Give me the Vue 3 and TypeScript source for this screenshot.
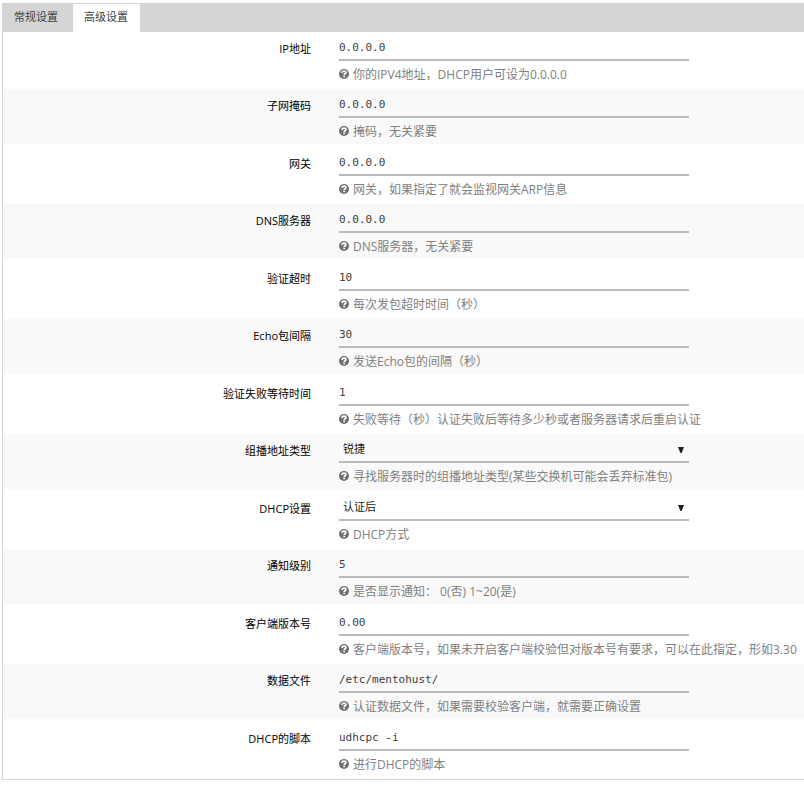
<script setup lang="ts">
import { reactive, ref } from 'vue'

interface Field {
  id: string
  label: string
  value: string
  help: string
  options?: string[]
}

const tabs = ['常规设置', '高级设置']
const activeTab = ref(1)

const fields = reactive<Field[]>([
  { id: 'ipaddr', label: 'IP地址', value: '0.0.0.0', help: '你的IPV4地址，DHCP用户可设为0.0.0.0' },
  { id: 'mask', label: '子网掩码', value: '0.0.0.0', help: '掩码，无关紧要' },
  { id: 'gateway', label: '网关', value: '0.0.0.0', help: '网关，如果指定了就会监视网关ARP信息' },
  { id: 'dns', label: 'DNS服务器', value: '0.0.0.0', help: 'DNS服务器，无关紧要' },
  { id: 'timeout', label: '验证超时', value: '10', help: '每次发包超时时间（秒）' },
  { id: 'interval', label: 'Echo包间隔', value: '30', help: '发送Echo包的间隔（秒）' },
  { id: 'wait', label: '验证失败等待时间', value: '1', help: '失败等待（秒）认证失败后等待多少秒或者服务器请求后重启认证' },
  { id: 'startmode', label: '组播地址类型', value: '锐捷', help: '寻找服务器时的组播地址类型(某些交换机可能会丢弃标准包)', options: ['标准', '锐捷'] },
  { id: 'dhcpmode', label: 'DHCP设置', value: '认证后', help: 'DHCP方式', options: ['不使用', '二次认证', '认证后', '认证前'] },
  { id: 'notify', label: '通知级别', value: '5', help: '是否显示通知： 0(否) 1~20(是)' },
  { id: 'version', label: '客户端版本号', value: '0.00', help: '客户端版本号，如果未开启客户端校验但对版本号有要求，可以在此指定，形如3.30' },
  { id: 'datafile', label: '数据文件', value: '/etc/mentohust/', help: '认证数据文件，如果需要校验客户端，就需要正确设置' },
  { id: 'dhcpscript', label: 'DHCP的脚本', value: 'udhcpc -i', help: '进行DHCP的脚本' },
])
</script>

<template>
  <main class="panel">
    <nav class="tabs" role="tablist">
      <button
        v-for="(tab, i) in tabs"
        :key="tab"
        type="button"
        role="tab"
        class="tab"
        :class="{ active: i === activeTab }"
        :aria-selected="i === activeTab"
        @click="activeTab = i"
      >{{ tab }}</button>
    </nav>
    <form class="fields" @submit.prevent>
      <div v-for="field in fields" :key="field.id" class="row">
        <label class="label" :for="field.id">{{ field.label }}</label>
        <div class="body">
          <div v-if="field.options" class="select-wrap">
            <select :id="field.id" v-model="field.value" class="control select">
              <option v-for="option in field.options" :key="option">{{ option }}</option>
            </select>
            <svg class="arrow" viewBox="0 0 6 6" aria-hidden="true"><path d="M0 0h6L3.6 6H2.4z" /></svg>
          </div>
          <input v-else :id="field.id" v-model="field.value" type="text" class="control" />
          <p class="help">
            <svg class="icon" viewBox="0 0 12 12" aria-hidden="true">
              <circle cx="6" cy="6" r="6" fill="#707070" />
              <path d="M3.6 4.7C3.7 3.2 4.6 2.6 6 2.6S8.2 3.3 8.2 4.4C8.2 5.7 6.2 5.7 6.2 7.2" fill="none" stroke="#fff" stroke-width="2" />
              <path d="M5.1 8h2.2v1.8H5.1z" fill="#fff" />
            </svg>
            <span>{{ field.help }}</span>
          </p>
        </div>
      </div>
    </form>
  </main>
</template>

<style>
body {
  margin: 0;
  background: #fff;
}
</style>

<style scoped>
.panel {
  margin: 3px 0 0 2px;
  border: 1px solid #d4d4d4;
  border-right: 0;
  font-family: "Open Sans", "Noto Sans CJK SC", sans-serif;
  font-size: 11px;
  color: #000;
}

.tabs {
  display: flex;
  gap: 3px;
  height: 28px;
  background: #d4d4d4;
}

.tab {
  border: 0;
  padding: 0 12px 4px 11px;
  background: none;
  font: inherit;
  color: #404040;
  cursor: pointer;
}

.tab.active {
  background: #fff;
}

.fields {
  display: flex;
  flex-direction: column;
}

.row {
  display: grid;
  grid-template-columns: 308px minmax(0, 1fr);
  column-gap: 28px;
  min-height: 55px;
}

.row:nth-child(odd) {
  margin: 3px 0 2px;
}

.row:first-child {
  margin-top: 0;
}

.row:nth-child(even) {
  background: #f9f9f9;
}

.label {
  justify-self: end;
  padding-top: 9px;
  line-height: 16px;
}

.body {
  display: flex;
  flex-direction: column;
}

.control {
  display: block;
  box-sizing: border-box;
  width: 100%;
  max-width: 350px;
  height: 29px;
  margin: 0;
  padding: 4px 0 0;
  border: 0;
  border-bottom: 2px solid #bababa;
  border-radius: 0;
  outline: 0;
  background: transparent;
  font-family: "DejaVu Sans Mono", "Noto Sans CJK SC", monospace;
  font-size: 11px;
  color: #404040;
}

.select-wrap {
  position: relative;
  max-width: 350px;
}

.select {
  appearance: none;
  padding: 2px 16px 0 4px;
  font-family: "Open Sans", "Noto Sans CJK SC", sans-serif;
  color: #202020;
}

.arrow {
  position: absolute;
  top: 13px;
  right: 5px;
  width: 6px;
  height: 6px;
  fill: #202020;
  pointer-events: none;
}

.help {
  display: flex;
  align-items: flex-start;
  gap: 4px;
  margin: 5px 0 0;
  font-size: 12px;
  line-height: 18px;
  white-space: nowrap;
  color: #808080;
}

.icon {
  flex: none;
  width: 10px;
  height: 10px;
  margin-top: 3px;
}
</style>
